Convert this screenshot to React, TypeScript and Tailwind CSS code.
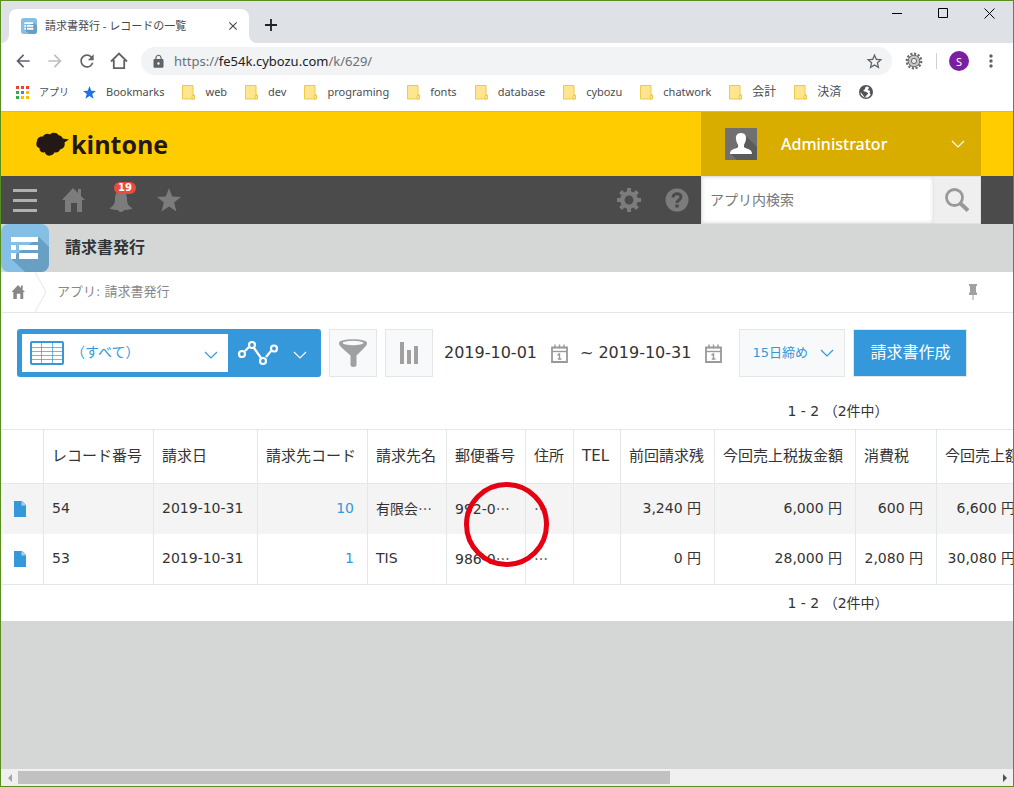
import { ReactNode } from 'react';
import clsx from 'clsx';
import {
  MdArrowBack,
  MdArrowForward,
  MdClose,
  MdLock,
  MdMoreVert,
  MdRefresh,
  MdStarBorder,
} from 'react-icons/md';

const folders = ['web', 'dev', 'programing', 'fonts', 'database', 'cybozu', 'chatwork'];
const folders_ja = ['会計', '決済'];

const columns = [
  { label: 'レコード番号', width: 'w-[110px]' },
  { label: '請求日', width: 'w-[104px]' },
  { label: '請求先コード', width: 'w-[110px]', right: true, link: true },
  { label: '請求先名', width: 'w-[79px]' },
  { label: '郵便番号', width: 'w-[79px]' },
  { label: '住所', width: 'w-[48px]' },
  { label: 'TEL', width: 'w-[47px]' },
  { label: '前回請求残', width: 'w-[94px]', right: true },
  { label: '今回売上税抜金額', width: 'w-[141px]', right: true },
  { label: '消費税', width: 'w-[81px]', right: true },
  { label: '今回売上額', width: 'w-[92px]', right: true },
];

const records = [
  ['54', '2019-10-31', '10', '有限会…', '992-0…', '…', '', '3,240 円', '6,000 円', '600 円', '6,600 円'],
  ['53', '2019-10-31', '1', 'TIS', '986-0…', '…', '', '0 円', '28,000 円', '2,080 円', '30,080 円'],
];

function Chevron({ className }: { className?: string }) {
  return (
    <svg viewBox="0 0 14 8" className={clsx('h-2 w-3.5 shrink-0', className)} fill="none" stroke="currentColor" strokeWidth="1.2">
      <path d="M1 1l6 6 6-6" />
    </svg>
  );
}

function AppIcon({ className }: { className?: string }) {
  return (
    <svg viewBox="0 0 48 48" className={className}>
      <rect width="48" height="48" rx="8" fill="#85bfe6" />
      <path d="M38 13l10 10v17a8 8 0 0 1-8 8H24L10 34.500z" fill="#6a9fc4" />
      <path d="M10 13h27v5H10zM10 21h5v5h-5zM18 21h19v5H18zM10 29h5v6h-5zM18 29h19v6H18z" fill="#fff" />
    </svg>
  );
}

function House({ className }: { className?: string }) {
  return (
    <svg viewBox="0 0 24 24" className={className} fill="currentColor">
      <path d="M12 0l5 5V1h3v7l4 4h-3v12h-5v-9h-6v9H4V12H1z" />
    </svg>
  );
}

function Folder() {
  return (
    <svg viewBox="0 0 13 15" className="h-[15px] w-[13px] shrink-0">
      <path d="M.5.5h10.500v9h1v4.500H.5z" fill="#ffe590" stroke="#edc94c" />
      <path d="M10 10.500h2.500V14H10z" fill="#ffe590" stroke="#edc94c" />
    </svg>
  );
}

function AppsGrid() {
  const colors = ['#ea4335', '#ea4335', '#ea4335', '#34a853', '#4285f4', '#fbbc05', '#34a853', '#fbbc05', '#fbbc05'];
  return (
    <svg viewBox="0 0 13 13" className="size-[13px] shrink-0">
      {colors.map((c, i) => (
        <rect key={i} x={(i % 3) * 5} y={Math.floor(i / 3) * 5} width="3" height="3" fill={c} />
      ))}
    </svg>
  );
}

function Calendar() {
  return (
    <svg viewBox="0 0 17 19" className="h-[19px] w-[17px]" fill="none" stroke="#999">
      <path d="M1 3.500h15v14.500H1z" strokeWidth="1.800" />
      <path d="M1 7.500h15" strokeWidth="1.400" />
      <path d="M4 .5v4M8.500 .5v4M13 .5v4" strokeWidth="1.400" />
      <path d="M6.500 11l2-1v5.500M6.800 15h3.600" strokeWidth="1.400" />
    </svg>
  );
}

function BrowserTabs() {
  return (
    <div className="flex h-[42px] items-end bg-[#dee1e6]">
      <div className="relative ml-2 flex h-[34px] w-60 items-center rounded-t-lg bg-white pl-3 pr-2">
        <span className="absolute -left-2 bottom-0 size-2 bg-white"><span className="block size-2 rounded-br-lg bg-[#dee1e6]" /></span>
        <span className="absolute -right-2 bottom-0 size-2 bg-white"><span className="block size-2 rounded-bl-lg bg-[#dee1e6]" /></span>
        <AppIcon className="size-4" />
        <span className="ml-2 flex-1 truncate text-[11px] leading-4 text-[#45494d]">請求書発行 - レコードの一覧</span>
        <button aria-label="タブを閉じる" className="flex size-4 items-center justify-center text-[#45494d]">
          <MdClose size={14} />
        </button>
      </div>
      <button aria-label="新しいタブ" className="mb-3 ml-4">
        <svg viewBox="0 0 12 12" className="size-3" stroke="#202124" strokeWidth="1.800"><path d="M6 0v12M0 6h12" /></svg>
      </button>
      <div className="mb-6 ml-auto flex items-center gap-[35px] pr-[18px]">
        <button aria-label="最小化">
          <svg viewBox="0 0 11 11" className="size-[11px]" stroke="#000"><path d="M0 5.500h10" /></svg>
        </button>
        <button aria-label="最大化">
          <svg viewBox="0 0 11 11" className="size-[11px]" fill="none" stroke="#000"><path d="M.5.5h9v9h-9z" /></svg>
        </button>
        <button aria-label="閉じる">
          <svg viewBox="0 0 11 11" className="size-[11px]" stroke="#000"><path d="M.5.5l10 10M10.500.5l-10 10" /></svg>
        </button>
      </div>
    </div>
  );
}

function AddressBar() {
  return (
    <div className="flex h-9 items-center pl-3 pr-3 text-[#5f6368]">
      <div className="flex items-center gap-3">
        <button aria-label="戻る"><MdArrowBack size={20} /></button>
        <button aria-label="進む" className="text-[#bdbfc1]"><MdArrowForward size={20} /></button>
        <button aria-label="再読み込み"><MdRefresh size={20} /></button>
        <button aria-label="ホーム">
          <svg viewBox="0 0 20 20" className="size-5" fill="none" stroke="currentColor" strokeWidth="1.800">
            <path d="M2 10.500l8-8 8 8M4.800 9v8.200h10.400V9" />
          </svg>
        </button>
      </div>
      <div className="relative ml-3 flex h-7 flex-1 items-center rounded-full bg-[#f1f3f4] pl-2.5 pr-2">
        <MdLock size={15} className="shrink-0" />
        <label htmlFor="url" className="ml-2 flex-1 text-[13px] leading-5 text-[#6b6f74]">
          https://<span className="text-[#202124]">fe54k.cybozu.com</span>/k/629/
        </label>
        <input id="url" className="absolute inset-y-0 left-8 right-9 bg-transparent text-[13px] outline-none" />
        <button aria-label="ブックマーク"><MdStarBorder size={19} /></button>
      </div>
      <button aria-label="拡張機能" className="ml-3 text-[#6b6b6b]">
        <svg viewBox="0 0 20 20" className="size-5" fill="none" stroke="currentColor">
          <circle cx="10" cy="10" r="7.300" strokeWidth="2.200" strokeDasharray="2.200 1.600" />
          <circle cx="10" cy="10" r="5.800" fill="#c4c4c4" strokeWidth="1" />
          <circle cx="10" cy="10" r="2.600" fill="#ececec" />
        </svg>
      </button>
      <span className="ml-3 h-4 w-px bg-[#cfd1d4]" />
      <button className="ml-3 flex size-5 items-center justify-center rounded-full bg-[#7b1fa2] text-[11px] leading-none text-white">S</button>
      <button aria-label="メニュー" className="ml-3"><MdMoreVert size={20} /></button>
    </div>
  );
}

function Bookmark({ icon, children, label }: { icon: ReactNode; children?: ReactNode; label?: string }) {
  return (
    <a href="#" aria-label={label} className="flex items-center gap-2.5 whitespace-nowrap">
      {icon}
      {children}
    </a>
  );
}

function BookmarksBar() {
  return (
    <div className="flex h-[33px] items-center gap-[18px] border-b border-[#b4b6b8] pb-1.5 pl-[15px] text-[11px] leading-4 text-[#4a4d51]">
      <div className="flex items-center gap-3.5">
        <Bookmark icon={<AppsGrid />}><span className="text-[10px]">アプリ</span></Bookmark>
        <Bookmark
          icon={
            <svg viewBox="0 0 24 24" className="size-[13px]" fill="#1a73e8"><path d="M12 0l3.200 8.600 8.800.4-6.900 5.600 2.400 8.900L12 18.500l-7.500 5 2.400-8.900L0 9l8.800-.4z" /></svg>
          }
        >
          Bookmarks
        </Bookmark>
      </div>
      {folders.map(name => (
        <Bookmark key={name} icon={<Folder />}>{name}</Bookmark>
      ))}
      {folders_ja.map(name => (
        <Bookmark key={name} icon={<Folder />}><span className="text-xs">{name}</span></Bookmark>
      ))}
      <Bookmark
        label="サイト"
        icon={
          <svg viewBox="0 0 14 14" className="size-3.5">
            <circle cx="7" cy="7" r="7" fill="#505358" />
            <path d="M7.500 1.500C5 3 7 4 5.500 4.500S4 6 5.500 6.500s3.500.5 3.500 2-1.500 1-2 2.500S5 12.500 4.500 11 2.500 8.500 1.500 7C1.500 10 4 12.600 7 12.600c2 0 4-1.500 4.800-3.200-.8-.4-1.300-1.400-1-2.400s.2-1.500-.8-1.500-1.500-1-.7-1.600S10 2.500 9.500 2z" fill="#fff" />
          </svg>
        }
      />
    </div>
  );
}

function KintoneHeader() {
  return (
    <header className="flex h-16 items-stretch bg-[#ffcc00] pr-8">
      <div className="flex flex-1 items-center gap-0.5 pl-[35px]">
        <svg viewBox="0 0 33 24" className="h-6 w-[33px]" fill="#231815">
          <path d="M7 4.500C8 1.500 12 1 14 2.500c2-2.500 7-2 8.500.7 2 .2 3.700 1.300 4.300 3.300L33 7.500l-4.500 3c1 3.500-1 6.500-4.500 7-1 2.800-3.500 3.500-5.500 2.800C17 24.500 10 25 8.800 20.300c-3 .7-5.800-1.300-5.300-4.300C.5 15.500 -.5 12 1 9.300 1 6 4 4 7 4.500z" />
        </svg>
        <span className="[font-family:'Open_Sans',sans-serif] text-[25px] font-bold leading-8 text-[#231815]">kintone</span>
      </div>
      <button className="flex w-[280px] items-center bg-[#d9ad00] pl-6 pr-4 text-white">
        <svg viewBox="0 0 32 32" className="size-8">
          <path fill="#707070" d="M0 0h32v32H0z" />
          <path fill="#5b5b5b" d="M20 7l12 12v13H12l-6-6z" />
          <path fill="#fff" d="M16 5c4 0 5.500 3 5 6-.2 3-1.500 4.500-2 6v2c2 2 8 1.500 8 7H5c0-5.500 6-5 8-7v-2c-.5-1.500-1.800-3-2-6-.5-3 1-6 5-6z" />
        </svg>
        <span className="ml-6 flex-1 text-left [font-family:'Noto_Sans',sans-serif] text-base font-medium leading-6">Administrator</span>
        <Chevron />
      </button>
    </header>
  );
}

function GlobalNav() {
  return (
    <nav className="flex h-12 items-stretch bg-[#4b4b4b] pr-8 text-[#7c7c7c]">
      <div className="flex flex-1 items-center gap-6 pl-3">
        <button aria-label="メニュー">
          <svg viewBox="0 0 24 24" className="size-6" fill="#b0b0b0"><path d="M0 1h24v3H0zM0 11h24v3H0zM0 21h24v3H0z" /></svg>
        </button>
        <a href="#" aria-label="ポータル"><House className="size-6" /></a>
        <button aria-label="通知" className="relative">
          <svg viewBox="0 0 24 24" className="size-6" fill="currentColor">
            <path d="M12 3c4.500 0 6 4 6 8 0 5.500 2 7 5.500 9.500C21 21.500 17 22 12 22S3 21.500 .5 20.500C4 18 6 16.500 6 11c0-4 1.500-8 6-8zM9 22h6c-.5 2.500-5.500 2.500-6 0z" />
          </svg>
          <span className="absolute -top-1.5 left-[5px] flex h-3 w-[22px] items-center justify-center rounded-full bg-[#e74c3c] text-[10px] font-bold leading-3 text-white">19</span>
        </button>
        <button aria-label="ブックマーク">
          <svg viewBox="0 0 24 24" className="size-6" fill="currentColor"><path d="M12 0l3.200 8.600 8.800.4-6.900 5.600 2.400 8.900L12 18.500l-7.500 5 2.400-8.900L0 9l8.800-.4z" /></svg>
        </button>
      </div>
      <div className="flex items-center gap-6 pr-3">
        <button aria-label="設定">
          <svg viewBox="0 0 24 24" className="size-6" fill="none" stroke="currentColor">
            <circle cx="12" cy="12" r="6.700" strokeWidth="4.500" />
            <path d="M12 0v4M12 20v4M0 12h4M20 12h4M3.500 3.500l3 3M17.500 17.500l3 3M3.500 20.500l3-3M17.500 6.500l3-3" strokeWidth="4" />
          </svg>
        </button>
        <button aria-label="ヘルプ">
          <svg viewBox="0 0 24 24" className="size-6">
            <circle cx="12" cy="12" r="11.500" fill="currentColor" />
            <path d="M8 9.500c0-5 8-5 8-.5 0 3-4 3-4 6" fill="none" stroke="#4b4b4b" strokeWidth="3" />
            <path d="M10.300 16.500h3.400v3h-3.400z" fill="#4b4b4b" />
          </svg>
        </button>
      </div>
      <div className="flex w-[280px] border border-[#dfe2e2] bg-white">
        <input
          aria-label="アプリ内検索"
          placeholder="アプリ内検索"
          className="min-w-0 flex-1 px-2 text-sm text-[#333] shadow-[inset_0_0_4px_#ddd] outline-none placeholder:text-[#777]"
        />
        <button aria-label="検索" className="flex w-[47px] items-center justify-center border-l border-[#e3e7e8] bg-[#efefef]">
          <svg viewBox="0 0 24 24" className="size-6" fill="none" stroke="#999">
            <circle cx="9.500" cy="9.500" r="8" strokeWidth="2.800" />
            <path d="M15 15l8 7.500" strokeWidth="4" />
          </svg>
        </button>
      </div>
    </nav>
  );
}

function Toolbar() {
  return (
    <div className="flex items-center whitespace-nowrap px-4 pt-4">
      <div className="flex h-12 w-[304px] shrink-0 rounded-[3px] bg-[#3498db]">
        <div className="relative my-[5px] ml-[5px] flex w-[206px] items-center bg-white pl-2 text-[#3498db]">
          <svg viewBox="0 0 34 24" className="h-6 w-[34px] shrink-0" fill="none" stroke="currentColor">
            <rect x="1" y="1" width="32" height="22" rx="1" strokeWidth="2" />
            <path d="M2 6.500h30M2 10.500h30M2 14.500h30M2 18.500h30M11.500 2v20M22.500 2v20" opacity=".7" />
          </svg>
          <select aria-label="一覧" className="ml-[7px] h-full flex-1 appearance-none pb-0.5 text-sm outline-none">
            <option>（すべて）</option>
          </select>
          <Chevron className="pointer-events-none absolute right-2.5 top-[17px]" />
        </div>
        <button aria-label="グラフ" className="flex flex-1 items-center gap-[15px] pl-2.5 text-white">
          <svg viewBox="0 0 40 26" className="h-[26px] w-10" fill="none" stroke="currentColor" strokeWidth="2.200">
            <path d="M7 11l4-4M16 8l7 10M28 17l5-6" />
            <circle cx="4" cy="14" r="3" />
            <circle cx="14" cy="5" r="3" />
            <circle cx="25" cy="21" r="3" />
            <circle cx="36" cy="8.500" r="3" />
          </svg>
          <Chevron className="mt-1" />
        </button>
      </div>
      <button aria-label="絞り込む" className="ml-2 flex size-12 items-center justify-center border border-[#e3e7e8] bg-[#f7f9fa]">
        <svg viewBox="0 0 28 28" className="size-7" fill="#a0a0a0">
          <path d="M0 4c0-5 28-5 28 0 0 2-1.500 3.500-3 5l-7.500 7.500V26c0 2.500-6 2.500-6 0v-9.500L3 9C1.500 7.500 0 6 0 4z" />
          <ellipse cx="14" cy="4" rx="10.500" ry="2.200" fill="#f7f9fa" />
        </svg>
      </button>
      <button aria-label="集計する" className="ml-2 flex size-12 items-center justify-center border border-[#e3e7e8] bg-[#f7f9fa]">
        <svg viewBox="0 0 18 22" className="h-[22px] w-[18px]" fill="#a0a0a0"><path d="M0 0h4v22H0zM7 8h4v14H7zM14 4h4v18h-4z" /></svg>
      </button>
      <input aria-label="開始日" defaultValue="2019-10-01" className="ml-[11px] w-24 text-base text-[#333] outline-none" />
      <button aria-label="開始日を選択" className="ml-[11px]"><Calendar /></button>
      <span className="ml-3 text-base leading-6 text-[#333]">~</span>
      <input aria-label="終了日" defaultValue="2019-10-31" className="ml-[5px] w-24 text-base text-[#333] outline-none" />
      <button aria-label="終了日を選択" className="ml-[11px]"><Calendar /></button>
      <div className="relative ml-[17px] h-12 w-[106px] shrink-0 border border-[#e3e7e8] bg-[#f7f9fa] text-[#3498db]">
        <select aria-label="締め日" className="size-full appearance-none pl-3 text-[13px] outline-none">
          <option>15日締め</option>
        </select>
        <Chevron className="pointer-events-none absolute right-2.5 top-[19px]" />
      </div>
      <button className="ml-2 h-12 border border-[#e3e7e8] bg-[#3498db] px-4 text-base text-white">請求書作成</button>
    </div>
  );
}

// the ellipsis sits mid-line in the Japanese font
function CellText({ value }: { value: string }) {
  const [text, rest] = value.split('…');
  return (
    <>
      {text}
      {rest !== undefined && <span className="[font-family:'Noto_Sans_CJK_JP',sans-serif]">…</span>}
    </>
  );
}

function RecordTable() {
  return (
    <div className="relative">
      <table className="w-full table-fixed border-separate border-spacing-0 border-y border-[#e3e7e8] text-sm leading-5">
        <colgroup>
          <col className="w-[42px]" />
          {columns.map(c => <col key={c.label} className={c.width} />)}
          <col />
        </colgroup>
        <thead>
          <tr className="h-[54px]">
            <th aria-label="詳細" className="border-b border-[#e3e7e8]" />
            {columns.map(c => (
              <th key={c.label} className="whitespace-nowrap border-b border-l border-[#e3e7e8] pb-0.5 pl-2 text-left text-[15px] font-normal">
                {c.label}
              </th>
            ))}
            <th className="border-b border-l border-[#e3e7e8]" />
          </tr>
        </thead>
        <tbody>
          {records.map(row => (
            <tr key={row[0]} className="h-[50px] odd:bg-[#f4f4f4]">
              <td className="pl-[13px]">
                <a href="#" aria-label={`レコード ${row[0]}`} className="block w-3">
                  <svg viewBox="0 0 12 16" className="h-4 w-3">
                    <path d="M0 0h8l4 4v12H0z" fill="#3498db" />
                    <path d="M7.500 0L12 4.500H7.500z" fill="#a9d2f0" />
                  </svg>
                </a>
              </td>
              {columns.map((c, i) => (
                <td key={c.label} className={clsx('whitespace-nowrap border-l border-[#e3e7e8] pb-0.5 pl-2', c.right && 'pr-[13px] text-right')}>
                  {c.link ? <a href="#" className="text-[#3498db]">{row[i]}</a> : <CellText value={row[i]} />}
                </td>
              ))}
              <td className="border-l border-[#e3e7e8]" />
            </tr>
          ))}
        </tbody>
      </table>
      {/* marker drawn over the list */}
      <div className="pointer-events-none absolute left-[463px] top-[53px] size-[85px] rounded-full border-[5px] border-[#e60012]" />
    </div>
  );
}

export default function App() {
  return (
    <div lang="ja" className="flex min-h-screen flex-col overflow-hidden border border-[#5a8f1f] bg-white [font-family:'DejaVu_Sans','Noto_Sans_CJK_JP',sans-serif]">
      <div className="[font-family:'Noto_Sans','Noto_Sans_CJK_JP',sans-serif]">
        <BrowserTabs />
        <AddressBar />
        <BookmarksBar />
      </div>
      <KintoneHeader />
      <GlobalNav />
      <div className="flex h-12 items-center bg-[#d4d7d6]">
        <AppIcon className="size-12" />
        <h1 className="ml-4 text-base font-bold leading-6 text-[#333]">請求書発行</h1>
      </div>
      <div className="flex h-[41px] items-center border-b border-[#e3e7e8] pl-2.5 text-[#888]">
        <a href="#" aria-label="ホーム"><House className="size-3.5" /></a>
        <svg viewBox="0 0 12 40" className="ml-2.5 h-10 w-3" fill="none" stroke="#e3e7e8"><path d="M0 0l11 20L0 40" /></svg>
        <a href="#" className="ml-2.5 text-[13px] leading-5">アプリ: 請求書発行</a>
        <button aria-label="固定" className="ml-auto mr-9">
          <svg viewBox="0 0 8 16" className="h-4 w-2" fill="#a0a0a0"><path d="M0 0h8v2H7v6l1 1v2H0V9l1-1V2H0zM3.500 11h1v5h-1z" /></svg>
        </button>
      </div>
      <main className="overflow-hidden text-[#333]">
        <Toolbar />
        <div className="w-[1674px]">
          <p className="pb-2 pt-6 text-center text-sm leading-5">1 - 2 （2件中）</p>
          <RecordTable />
          <p className="py-2 text-center text-sm leading-5">1 - 2 （2件中）</p>
        </div>
      </main>
      <div className="flex-1 bg-[#d4d7d6]" />
      <div className="flex h-[17px] items-center bg-[#f0f0f0]">
        <button aria-label="左へ" className="flex w-[17px] justify-center">
          <svg viewBox="0 0 4 8" className="h-2 w-1" fill="#a3a3a3"><path d="M4 0v8L0 4z" /></svg>
        </button>
        <div className="flex-1"><div className="h-[13px] w-2/3 bg-[#c1c1c1]" /></div>
        <button aria-label="右へ" className="flex w-[17px] justify-center">
          <svg viewBox="0 0 4 8" className="h-2 w-1" fill="#505050"><path d="M0 0v8l4-4z" /></svg>
        </button>
      </div>
    </div>
  );
}
